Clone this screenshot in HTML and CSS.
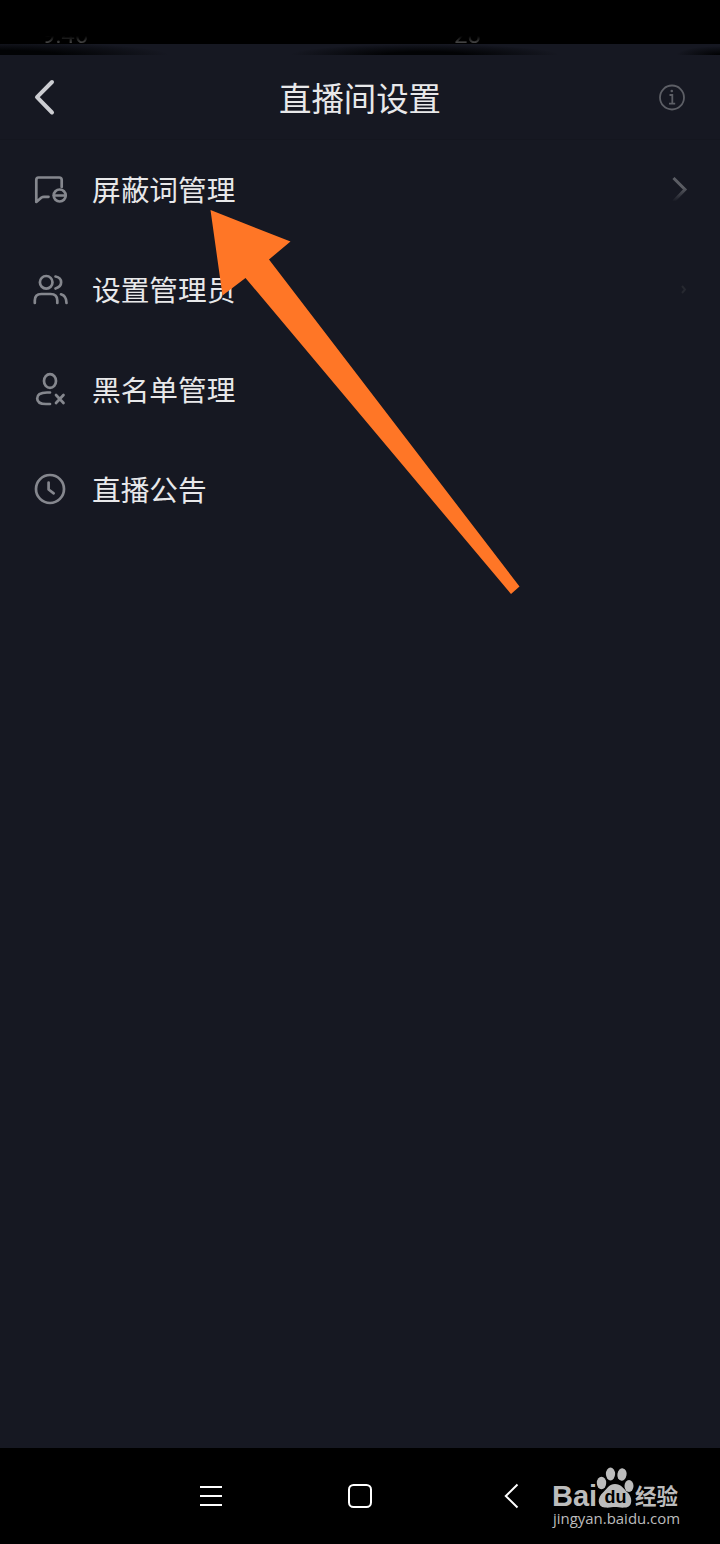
FILE: index.html
```
<!DOCTYPE html>
<html lang="zh-CN">

<head>
    <meta charset="UTF-8">
    <title>直播间设置</title>
    <link rel="stylesheet" href="styles.css">
</head>

<body>
    <div class="phone">
        <div class="status-bar">
            <span class="time">9:46</span>
            <span class="speed">28</span>
        </div>
        <div class="status-shade"></div>

        <div class="header">
            <svg class="back" width="24" height="40" viewBox="0 0 24 40">
                <path d="M20 5L5 20.200L20 35.500" />
            </svg>
            <h1 class="title">直播间设置</h1>
            <svg class="info" width="28" height="28" viewBox="0 0 28 28">
                <circle cx="14" cy="14.500" r="12" />
                <path d="M11.500 12H14.300V20.500M11 20.700H17.200" />
                <circle class="dot" cx="13.800" cy="8" r="1.300" />
            </svg>
        </div>

        <div class="list">
            <div class="row">
                <svg class="icon" width="36" height="36" viewBox="0 0 36 36">
                    <path d="M29.700 15V8Q29.700 5.500 27.200 5.500H6.500Q4.300 5.500 4.300 8V30L9.500 25.500Q10.500 24.800 12 24.800H16.500" />
                    <circle cx="27.700" cy="23.500" r="6" />
                    <path d="M22 23.500H33.500" />
                </svg>
                <span class="label">屏蔽词管理</span>
                <svg class="arrow" width="18" height="30" viewBox="0 0 18 30">
                    <defs>
                        <linearGradient id="fade" x1="0" y1="0" x2="0" y2="1">
                            <stop offset="0.400" stop-color="#5b5d64" />
                            <stop offset="1" stop-color="#161822" />
                        </linearGradient>
                    </defs>
                    <path stroke="url(#fade)" d="M2.500 3L14 14.500L2.500 26.500" />
                </svg>
            </div>
            <div class="row">
                <svg class="icon" width="36" height="36" viewBox="0 0 36 36">
                    <circle cx="14.200" cy="10.300" r="6.300" />
                    <path d="M23.500 4.500C31 6 31 14.500 23.500 16.500" />
                    <path d="M2.800 31V28.500Q2.800 22 9.300 22H18.500Q25.300 22 25.300 28.500V31" />
                    <path d="M29 22.300Q34.500 24 34.500 31" />
                </svg>
                <span class="label">设置管理员</span>
                <svg class="arrow faint" width="6" height="10" viewBox="0 0 6 10">
                    <path d="M1 1L4 4.500L1 8" />
                </svg>
            </div>
            <div class="row">
                <svg class="icon" width="36" height="36" viewBox="0 0 36 36">
                    <ellipse cx="18" cy="10" rx="6" ry="6.900" />
                    <path d="M18 21.500H15C8 21.500 5.200 24.200 5.200 27.500C5.200 31 8 33 14 33H18" />
                    <path d="M24 24L31.500 32M31.500 24L24 32" />
                </svg>
                <span class="label">黑名单管理</span>
            </div>
            <div class="row">
                <svg class="icon" width="36" height="36" viewBox="0 0 36 36">
                    <circle cx="18" cy="18" r="14" />
                    <path d="M16.600 11.500V18.500L21.700 22.300" />
                </svg>
                <span class="label">直播公告</span>
            </div>
        </div>

        <div class="nav-bar">
            <svg class="nav-icon" width="24" height="26" viewBox="0 0 24 26">
                <path d="M1 4H23M1 13H23M1 22H23" />
            </svg>
            <svg class="nav-icon" width="26" height="26" viewBox="0 0 26 26">
                <rect x="2" y="2" width="22" height="22" rx="4.500" />
            </svg>
            <svg class="nav-icon" width="24" height="26" viewBox="0 0 24 26">
                <path d="M20.500 1.500L8.800 13L20.500 24.500" />
            </svg>
        </div>

        <div class="watermark">
            <div class="brand">
                <span class="bai">Bai</span>
                <span class="paw">
                    <svg width="38" height="42" viewBox="0 0 38 42">
                        <ellipse cx="5.500" cy="16" rx="4.700" ry="6.200" />
                        <ellipse cx="14.500" cy="7" rx="4.600" ry="6.400" />
                        <ellipse cx="26" cy="7.500" rx="4.600" ry="6.200" transform="rotate(10 26 7.500)" />
                        <ellipse cx="33" cy="19" rx="4.500" ry="6" />
                        <path d="M19 17C25 17 27 21 31 25C37 30 37 40.500 29 40.500C25 41 22 40 19 40C16 40 13 41 9 40.500C1 40 1 30.500 7 25.500C12 21 13 17 19 17Z" />
                    </svg>
                    <span class="du">du</span>
                </span>
                <span class="jingyan">经验</span>
            </div>
            <div class="site">jingyan.baidu.com</div>
        </div>

        <!-- pointer to the first row -->
        <svg class="pointer" width="310" height="386" viewBox="0 0 310 386">
            <path d="M.500 0L80.500 31.500L59 49.500L309.500 376.500L301 384L35.500 68L12.500 85.500Z" />
        </svg>
    </div>
</body>

</html>
```

FILE: styles.css
```
* {
    box-sizing: border-box;
}

body {
    margin: 0;
    background-color: #000;
    font-family: "Noto Sans CJK SC", sans-serif;
}

.phone {
    position: relative;
    display: flex;
    flex-direction: column;
    width: 720px;
    height: 1544px;
    overflow: hidden;
    background-color: #161822;
}

.status-bar {
    display: flex;
    align-items: flex-end;
    height: 44px;
    padding-left: 42px;
    background-color: #000;
    color: #666;
    font-family: Roboto, sans-serif;
    font-size: 24px;
    line-height: 28px;
}

.time,
.speed {
    height: 23px;
    -webkit-mask-image: linear-gradient(transparent 15px, #000 25px);
    mask-image: linear-gradient(transparent 15px, #000 25px);
}

.time {
    width: 412px;
}

/* dark patches left under the status bar */
.status-shade {
    height: 11px;
    background:
        radial-gradient(ellipse 170px 13px at 0 100%, #020305 35%, transparent),
        radial-gradient(ellipse 135px 11px at 425px 100%, #020305 30%, transparent),
        radial-gradient(ellipse 44px 9px at 100% 100%, #020305 10%, transparent);
}

.header {
    display: flex;
    align-items: center;
    justify-content: space-between;
    height: 85px;
    padding: 0 34px 0 32px;
    border-bottom: 1px solid #14161f;
}

.back {
    fill: none;
    stroke: #cccdd2;
    stroke-width: 4;
    stroke-linecap: round;
    stroke-linejoin: round;
}

.title {
    margin: 0 0 0 6px;
    color: #e8e8ea;
    font-size: 32.400px;
    font-weight: 400;
    line-height: 46px;
}

.info {
    fill: none;
    stroke: #5d5f66;
    stroke-width: 1.800;
}

.info .dot {
    fill: #5d5f66;
    stroke: none;
}

.list {
    flex: 1;
}

.row {
    display: flex;
    align-items: center;
    height: 99.800px;
    padding: 0 31px 0 32px;
}

.icon {
    fill: none;
    stroke: #85878e;
    stroke-width: 2.700;
    stroke-linecap: round;
    stroke-linejoin: round;
}

.label {
    margin: 0 0 1.400px 24px;
    color: #e8e8ea;
    font-size: 28.700px;
    line-height: 42px;
}

.arrow {
    margin-left: auto;
    fill: none;
    stroke-width: 3;
}

.faint {
    margin-right: 2px;
    stroke: #262830;
    stroke-width: 2;
}

.nav-bar {
    display: flex;
    align-items: center;
    justify-content: space-between;
    height: 96px;
    padding: 0 199px;
    background-color: #000;
}

.nav-icon {
    fill: none;
    stroke: #fff;
    stroke-width: 2;
}

/* site mark lies over the navigation bar */
.watermark {
    position: absolute;
    left: 552px;
    top: 1467px;
    color: #bcbcbc;
}

.brand {
    display: flex;
    align-items: flex-end;
    height: 42px;
}

.bai {
    width: 44px;
    font-family: "Liberation Sans", sans-serif;
    font-size: 29px;
    font-weight: 700;
    line-height: 25px;
}

.paw {
    display: grid;
    width: 39px;
}

.paw svg,
.du {
    grid-area: 1 / 1;
}

.paw svg {
    fill: #bcbcbc;
}

.du {
    align-self: end;
    justify-self: center;
    margin-bottom: 3px;
    color: #000;
    font-family: "Liberation Sans", sans-serif;
    font-size: 18px;
    font-weight: 700;
    line-height: 18px;
}

.jingyan {
    margin-bottom: 2px;
    font-size: 21.500px;
    font-weight: 700;
    line-height: 25px;
}

.site {
    padding-left: 1px;
    font-family: "Open Sans", sans-serif;
    font-size: 14.950px;
    line-height: 18px;
}

.pointer {
    position: absolute;
    left: 210px;
    top: 210px;
    fill: #ff7626;
}
```
